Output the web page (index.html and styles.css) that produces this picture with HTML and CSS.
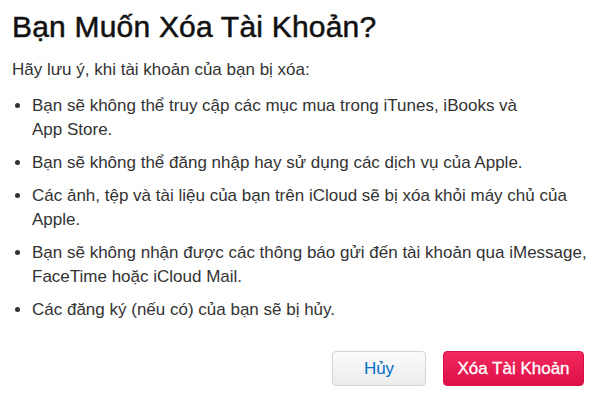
FILE: index.html
```html
<!DOCTYPE html>
<html lang="vi">
<head>
    <meta charset="UTF-8">
    <meta name="viewport" content="width=device-width, initial-scale=1.0">
    <title>Xóa Tài Khoản</title>
    <link rel="stylesheet" href="styles.css">
</head>
<body>
    <div class="dialog">
        <h1>Bạn Muốn Xóa Tài Khoản?</h1>
        <p class="intro">Hãy lưu ý, khi tài khoản của bạn bị xóa:</p>
        <ul class="notes">
            <li>Bạn sẽ không thể truy cập các mục mua trong iTunes, iBooks và App&nbsp;Store.</li>
            <li>Bạn sẽ không thể đăng nhập hay sử dụng các dịch vụ của Apple.</li>
            <li>Các ảnh, tệp và tài liệu của bạn trên iCloud sẽ bị xóa khỏi máy chủ của Apple.</li>
            <li>Bạn sẽ không nhận được các thông báo gửi đến tài khoản qua iMessage, FaceTime hoặc iCloud&nbsp;Mail.</li>
            <li>Các đăng ký (nếu có) của bạn sẽ bị hủy.</li>
        </ul>
        <div class="actions">
            <button type="button" class="btn btn-cancel">Hủy</button>
            <button type="button" class="btn btn-delete">Xóa Tài Khoản</button>
        </div>
    </div>
</body>
</html>
```

FILE: styles.css
```css
body {
    margin: 0;
    background: #ffffff;
    font-family: "Liberation Sans", Arial, sans-serif;
    color: #333333;
}

.dialog {
    padding: 7px 28px 0 12px;
}

h1 {
    margin: 0;
    font-size: 30px;
    font-weight: normal;
    color: #111111;
    line-height: 40px;
    letter-spacing: 0.2px;
    -webkit-text-stroke: 0.5px #111111;
}

.intro {
    margin: 11px 0 0;
    font-size: 17px;
    line-height: 24px;
}

.notes {
    margin: 12px -8px 0 0;
    padding-left: 20px;
    font-size: 17px;
    line-height: 24px;
}

.notes li {
    margin-bottom: 9px;
}

.actions {
    display: flex;
    justify-content: flex-end;
    gap: 17px;
    margin-top: 29px;
}

.btn {
    height: 35px;
    border-radius: 4px;
    font-family: "Liberation Sans", Arial, sans-serif;
    font-size: 17px;
    cursor: pointer;
}

.btn-cancel {
    width: 94px;
    border: 1px solid #d4d4d4;
    background: linear-gradient(to bottom, #fbfbfb, #ececec);
    color: #0070c9;
}

.btn-delete {
    width: 141px;
    border: 1px solid #dc0f48;
    background: linear-gradient(to bottom, #f22a5d, #dd0f49);
    color: #ffffff;
    -webkit-text-stroke: 0.3px #ffffff;
}
```
